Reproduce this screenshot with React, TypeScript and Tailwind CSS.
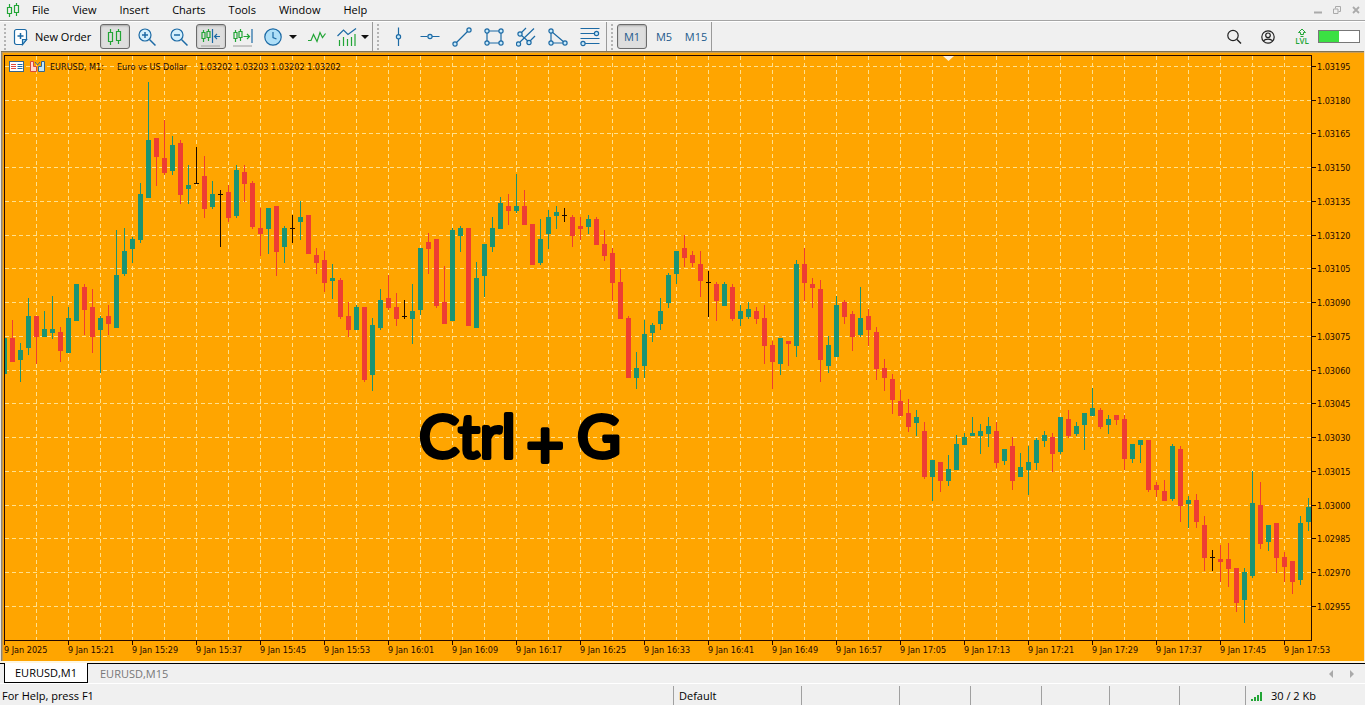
import React from 'react';

type Side = 'up' | 'down' | 'flat';
// high, body top, body bottom, low (chart units, growing downwards)
type Candle = [number, number, number, number, Side];

const candles: Candle[] = [
  [338, 338, 374, 376, 'up'], [320, 338, 362, 362, 'down'], [343, 350, 360, 382, 'up'], [298, 316, 348, 355, 'up'],
  [316, 316, 337, 364, 'down'], [311, 329, 337, 337, 'up'], [296, 329, 333, 339, 'up'], [327, 332, 351, 362, 'down'],
  [307, 318, 353, 353, 'up'], [284, 284, 321, 321, 'up'], [284, 287, 310, 335, 'down'], [289, 307, 337, 353, 'down'],
  [316, 318, 330, 373, 'up'], [305, 316, 324, 335, 'down'], [230, 275, 328, 328, 'up'], [228, 251, 274, 276, 'up'],
  [237, 239, 249, 263, 'up'], [183, 194, 240, 243, 'up'], [82, 140, 198, 198, 'up'], [138, 138, 157, 186, 'down'],
  [120, 158, 173, 175, 'down'], [136, 145, 171, 175, 'up'], [140, 143, 195, 204, 'down'], [165, 185, 189, 204, 'up'],
  [147, 183, 184, 184, 'flat'], [156, 176, 209, 218, 'down'], [181, 194, 207, 209, 'up'], [190, 194, 195, 247, 'flat'],
  [185, 192, 218, 222, 'down'], [165, 170, 216, 218, 'up'], [165, 172, 184, 202, 'down'], [181, 183, 227, 229, 'down'],
  [208, 228, 234, 256, 'down'], [208, 208, 229, 254, 'up'], [206, 206, 252, 276, 'down'], [226, 228, 247, 263, 'up'],
  [215, 228, 229, 243, 'flat'], [201, 217, 222, 240, 'up'], [215, 215, 254, 254, 'down'], [248, 255, 263, 274, 'down'],
  [251, 260, 283, 292, 'down'], [264, 278, 281, 299, 'up'], [278, 280, 317, 319, 'down'], [302, 316, 330, 337, 'down'],
  [305, 307, 330, 330, 'up'], [307, 307, 380, 382, 'down'], [318, 325, 375, 391, 'up'], [289, 300, 328, 330, 'up'],
  [275, 298, 308, 310, 'down'], [293, 307, 319, 326, 'down'], [300, 316, 317, 319, 'flat'], [284, 311, 319, 344, 'up'],
  [248, 248, 310, 315, 'up'], [233, 242, 249, 274, 'down'], [239, 239, 306, 308, 'down'], [266, 302, 324, 324, 'down'],
  [228, 230, 321, 321, 'up'], [226, 228, 236, 252, 'up'], [228, 228, 326, 326, 'down'], [262, 278, 328, 328, 'up'],
  [244, 244, 276, 297, 'up'], [217, 228, 247, 252, 'up'], [197, 203, 229, 229, 'up'], [194, 206, 211, 225, 'down'],
  [174, 206, 211, 213, 'up'], [190, 206, 225, 225, 'down'], [224, 224, 265, 265, 'down'], [219, 239, 263, 265, 'up'],
  [210, 217, 234, 249, 'up'], [206, 212, 216, 229, 'up'], [208, 215, 216, 222, 'flat'], [215, 217, 236, 247, 'down'],
  [217, 226, 229, 240, 'down'], [215, 219, 227, 234, 'up'], [217, 219, 245, 245, 'down'], [230, 244, 256, 261, 'down'],
  [248, 253, 283, 301, 'down'], [269, 282, 319, 319, 'down'], [316, 318, 378, 378, 'down'], [352, 368, 378, 389, 'up'],
  [320, 334, 366, 378, 'up'], [323, 325, 333, 342, 'up'], [298, 311, 324, 330, 'up'], [273, 275, 303, 308, 'up'],
  [251, 251, 274, 284, 'up'], [235, 248, 258, 267, 'down'], [251, 255, 263, 267, 'down'], [251, 264, 281, 297, 'down'],
  [271, 282, 283, 317, 'flat'], [282, 284, 301, 321, 'down'], [282, 284, 306, 306, 'up'], [284, 287, 319, 321, 'down'],
  [305, 311, 319, 326, 'up'], [302, 309, 317, 319, 'up'], [307, 311, 319, 324, 'down'], [305, 318, 346, 364, 'down'],
  [341, 345, 362, 389, 'down'], [338, 338, 364, 375, 'up'], [341, 341, 344, 366, 'down'], [260, 264, 346, 357, 'up'],
  [248, 264, 283, 301, 'down'], [278, 284, 288, 308, 'down'], [280, 289, 360, 382, 'down'], [336, 345, 366, 373, 'up'],
  [296, 305, 357, 357, 'up'], [300, 302, 317, 324, 'down'], [311, 314, 337, 351, 'down'], [287, 318, 335, 337, 'up'],
  [309, 316, 330, 346, 'down'], [327, 332, 369, 380, 'down'], [359, 368, 378, 391, 'down'], [374, 379, 400, 414, 'down'],
  [390, 401, 416, 416, 'down'], [399, 413, 427, 432, 'down'], [410, 417, 423, 436, 'up'], [422, 431, 477, 479, 'down'],
  [460, 460, 477, 501, 'up'], [462, 462, 481, 492, 'down'], [455, 469, 481, 486, 'up'], [435, 444, 470, 470, 'up'],
  [433, 437, 445, 445, 'up'], [417, 433, 436, 436, 'up'], [424, 431, 436, 454, 'up'], [417, 426, 434, 447, 'up'],
  [422, 431, 463, 468, 'down'], [449, 449, 461, 465, 'up'], [437, 446, 481, 490, 'down'], [453, 467, 477, 477, 'up'],
  [446, 462, 470, 495, 'up'], [438, 440, 463, 470, 'up'], [431, 435, 441, 447, 'up'], [433, 437, 454, 472, 'down'],
  [417, 417, 452, 454, 'up'], [410, 419, 436, 438, 'down'], [422, 426, 434, 436, 'up'], [413, 413, 425, 450, 'up'],
  [388, 408, 416, 416, 'up'], [408, 410, 427, 429, 'down'], [415, 419, 425, 434, 'up'], [415, 415, 420, 425, 'down'],
  [415, 419, 459, 470, 'down'], [444, 444, 459, 463, 'up'], [440, 440, 445, 463, 'up'], [440, 440, 490, 492, 'down'],
  [482, 485, 490, 497, 'down'], [480, 491, 501, 501, 'down'], [444, 446, 499, 501, 'up'], [446, 449, 506, 522, 'down'],
  [496, 500, 504, 528, 'up'], [494, 500, 522, 528, 'down'], [516, 525, 558, 571, 'down'], [550, 557, 558, 571, 'flat'],
  [545, 559, 562, 582, 'down'], [543, 559, 569, 587, 'down'], [568, 568, 603, 612, 'down'], [568, 572, 600, 623, 'up'],
  [471, 503, 576, 578, 'up'], [482, 505, 544, 549, 'down'], [525, 525, 542, 551, 'up'], [523, 523, 558, 573, 'down'],
  [552, 557, 567, 582, 'down'], [561, 561, 582, 594, 'down'], [516, 523, 580, 585, 'up'], [498, 507, 522, 531, 'up'],
];

const fills: Record<Side, string> = { up: '#1b9472', down: '#ee3d33', flat: '#1a0a00' };

const prices = Array.from({ length: 17 }, (_, i) => ({
  label: ((103195 - i * 15) / 100000).toFixed(5),
  y: Math.floor(66.4 + i * 33.75),
}));

const times = [
  '2025', '15:21', '15:29', '15:37', '15:45', '15:53', '16:01', '16:09', '16:17', '16:25', '16:33',
  '16:41', '16:49', '16:57', '17:05', '17:13', '17:21', '17:29', '17:37', '17:45', '17:53',
];

const menus = ['File', 'View', 'Insert', 'Charts', 'Tools', 'Window', 'Help'];

const BLUE = '#1c6aa5';
const GREEN = '#22a536';

function Chart() {
  return (
    <svg
      viewBox="0 51 1365 610"
      className="block w-full bg-[#ffa500]"
      fontFamily="'DejaVu Sans Condensed', 'DejaVu Sans', sans-serif"
      fontSize="9"
      fill="#240800"
      role="img"
      aria-label="EURUSD, M1 chart"
    >
      <defs>
        <clipPath id="plot">
          <rect x="5" y="56" width="1306" height="584" />
        </clipPath>
      </defs>
      <g shapeRendering="crispEdges">
        <rect x="0" y="51" width="1" height="610" fill="#e8e8e8" />
        <rect x="1" y="51" width="1" height="610" fill="#8b8577" />
        <rect x="2" y="52" width="1" height="609" fill="#c79a4e" />
        <rect x="1" y="51" width="1363" height="1" fill="#7d7358" />
        <rect x="2" y="52" width="1362" height="1" fill="#c99c56" />
        <rect x="1364" y="51" width="1" height="610" fill="#efe6d6" />
        <g stroke="#ffe08c" strokeDasharray="4 3" clipPath="url(#plot)">
          {prices.map(p => (
            <line key={p.y} x1="5" x2="1311" y1={p.y + 0.5} y2={p.y + 0.5} />
          ))}
          {Array.from({ length: 40 }, (_, i) => 36.5 + i * 32).map(x => (
            <line key={x} x1={x} x2={x} y1="56" y2="640" />
          ))}
        </g>
        <g clipPath="url(#plot)">
          {candles.map(([high, top, bottom, low, side], i) => (
            <g key={i} fill={fills[side]}>
              <rect x={4 + i * 8} y={high} width="1" height={low - high} />
              <rect x={2 + i * 8} y={top} width="5" height={bottom - top} />
            </g>
          ))}
        </g>
        <path d="M4.5 640.5V55.5H1311.5V640.5Z" fill="none" stroke="#240800" />
        {prices.map(p => (
          <rect key={p.y} x="1312" y={p.y} width="4" height="1" />
        ))}
        {times.map((t, i) => (
          <rect key={t} x={4 + i * 64} y="641" width="1" height="4" />
        ))}
      </g>
      <path d="M943 56h11l-5.500 5Z" fill="#fff0d8" />
      {prices.map(p => (
        <text key={p.label} x="1317" y={p.y + 4}>{p.label}</text>
      ))}
      {times.map((t, i) => (
        <text key={t} x={4 + i * 64} y="653">9 Jan {t}</text>
      ))}
      <g>
        <rect x="9.500" y="61.500" width="14" height="10" fill="#fff" stroke="#35658e" />
        <path d="M11 64.500h5M11 66.500h5M11 68.500h5" stroke="#e04a3d" />
        <path d="M17.500 64.500h5M17.500 66.500h5M17.500 68.500h5" stroke="#1c6aa5" />
        <path d="M30.500 61.500h3v5h3v5h-6Z" fill="#ffd9cf" stroke="#d9493a" />
        <path d="M44.500 61.500h-3v5h-3v5h6Z" fill="#bfe6fb" stroke="#35658e" />
        <path d="M35 62l2.500 3l2.500 -3" fill="none" stroke="#35658e" />
      </g>
      <text x="50" y="70">EURUSD, M1:</text>
      <text x="117" y="70">Euro vs US Dollar</text>
      <text x="199" y="70">1.03202 1.03203 1.03202 1.03202</text>
      <g
        fill="#000"
        stroke="#000"
        strokeWidth="4"
        strokeLinejoin="round"
        fontFamily="Lato, sans-serif"
        fontSize="60"
      >
        <text x="419" y="458">Ctrl</text>
        <text x="526" y="468" fontSize="66">+</text>
        <text x="577" y="458">G</text>
      </g>
    </svg>
  );
}

function Icon({ children, w = 20 }: { children: React.ReactNode; w?: number }) {
  return (
    <svg width={w} height="20" viewBox={`0 0 ${w} 20`} fill="none" stroke={BLUE} strokeWidth="1.2" className="shrink-0">
      {children}
    </svg>
  );
}

function ToolButton({ label, active, className = 'w-[30px]', children }: {
  label: string;
  active?: boolean;
  className?: string;
  children: React.ReactNode;
}) {
  return (
    <button
      type="button"
      aria-label={label}
      className={`flex h-[25px] shrink-0 items-center justify-center rounded-[3px] border ${className} ${
        active ? 'border-[#6b6b6b] bg-[#dedede] shadow-[inset_0_1px_2px_#aaa]' : 'border-transparent'
      }`}
    >
      {children}
    </button>
  );
}

function Grip() {
  return <div className="mx-1 h-[26px] w-0 shrink-0 border-l-2 border-dotted border-[#b4b4b4]" />;
}

function Divider() {
  return <div className="h-full w-px shrink-0 bg-[#9a9a9a]" />;
}

function Caret() {
  return (
    <svg width="8" height="4" viewBox="0 0 8 4" className="shrink-0">
      <path d="M0 0h8L4 4Z" fill="#111" />
    </svg>
  );
}

function Toolbar() {
  return (
    <div className="flex h-[30px] items-center border-t border-white">
      <Grip />
      <button type="button" className="mr-2 flex h-[25px] w-[82px] shrink-0 items-center gap-1 pl-px whitespace-nowrap">
        <Icon>
          <path d="M5.500 2.500h8a2 2 0 0 1 2 2v8l-4 5h-6a2 2 0 0 1-2-2v-11a2 2 0 0 1 2-2Z" fill="#fff" />
          <path d="M15.500 12.500h-4v5Z" fill="#9ed6f5" />
          <path d="M9.500 6v6M6.500 9h6" strokeWidth="1.500" />
        </Icon>
        New Order
      </button>
      <div className="flex items-center gap-[2px]">
        <ToolButton label="Candlesticks" active>
          <Icon>
            <path d="M5.500 2v3M5.500 15v3M13.500 2v2M13.500 14v3M3.500 5.500h4v9h-4ZM11.500 4.500h4v9h-4Z" stroke={GREEN} />
          </Icon>
        </ToolButton>
        <ToolButton label="Zoom in">
          <Icon>
            <circle cx="8" cy="8" r="6" fill="#d4effc" />
            <path d="M12.500 12.500l6 6" strokeWidth="1.500" />
            <path d="M8 5v6M5 8h6" strokeWidth="1.500" />
          </Icon>
        </ToolButton>
        <ToolButton label="Zoom out">
          <Icon>
            <circle cx="8" cy="8" r="6" fill="#d4effc" />
            <path d="M12.500 12.500l6 6" strokeWidth="1.500" />
            <path d="M5 8h6" strokeWidth="1.500" />
          </Icon>
        </ToolButton>
        <ToolButton label="Chart shift" active>
          <Icon>
            <path d="M2.500 3v2M2.500 12v3M7.500 2v2M7.500 11v3M1 5.500h3v6h-3ZM6 4.500h3v6h-3Z" stroke={GREEN} />
            <path d="M11.500 2v14M19 9.500h-5.500M16 7l-2.500 2.500l2.500 2.500" />
            <path d="M0 19h19" stroke="#aaa" />
          </Icon>
        </ToolButton>
        <ToolButton label="Auto scroll">
          <Icon>
            <path d="M2.500 3v2M2.500 12v3M7.500 2v2M7.500 11v3M1 5.500h3v6h-3ZM6 4.500h3v6h-3ZM10.500 9.500h6M14 7l2.500 2.500l-2.500 2.500" stroke={GREEN} />
            <path d="M19 2v14" />
            <path d="M0 19h19" stroke="#aaa" />
          </Icon>
        </ToolButton>
        <ToolButton label="Periods" className="w-10 gap-[6px]">
          <Icon>
            <circle cx="10" cy="10" r="8.200" fill="#aedff8" />
            <path d="M10 5v5.500l3.500 1.500" />
          </Icon>
          <Caret />
        </ToolButton>
        <ToolButton label="Indicators">
          <Icon>
            <path d="M1 13.500h3l2.500-6l3.500 7l3-9l2.500 5l3-4" stroke={GREEN} />
          </Icon>
        </ToolButton>
        <ToolButton label="Objects" className="w-[38px] gap-1">
          <Icon>
            <path d="M0.500 9l6-6l4.500 4.500l8-6" />
            <path d="M2.500 13v6M6.500 10v9M10.500 12v7M14.500 10v9M18 7v12" stroke={GREEN} />
          </Icon>
          <Caret />
        </ToolButton>
      </div>
      <Divider />
      <Grip />
      <div className="flex items-center gap-[2px] pr-px">
        <ToolButton label="Vertical line">
          <Icon><path d="M10.500 0.500v7M10.500 12v7" /><circle cx="10.500" cy="9.700" r="2.100" fill="#c9eafb" /></Icon>
        </ToolButton>
        <ToolButton label="Horizontal line">
          <Icon><path d="M0.500 9.500h7M12 9.500h7.500" /><circle cx="10" cy="9.500" r="2.100" fill="#c9eafb" /></Icon>
        </ToolButton>
        <ToolButton label="Trend line">
          <Icon>
            <path d="M4.500 15.500l11-11" />
            <circle cx="3" cy="17" r="2.100" fill="#c9eafb" /><circle cx="17" cy="3" r="2.100" fill="#c9eafb" />
          </Icon>
        </ToolButton>
        <ToolButton label="Rectangle">
          <Icon>
            <path d="M3 4h14v12H3Z" />
            <g fill="#c9eafb">
              <circle cx="3" cy="4" r="2.100" /><circle cx="17" cy="4" r="2.100" />
              <circle cx="3" cy="16" r="2.100" /><circle cx="17" cy="16" r="2.100" />
            </g>
          </Icon>
        </ToolButton>
        <ToolButton label="Pitchfork">
          <Icon>
            <path d="M5 6l5-5M4 15l14-13.500M14 14l5-5M5 8l8 7" />
            <g fill="#c9eafb">
              <circle cx="4" cy="7" r="2.100" /><circle cx="2.500" cy="17" r="2.100" /><circle cx="13" cy="15.500" r="2.100" />
            </g>
          </Icon>
        </ToolButton>
        <ToolButton label="Triangle">
          <Icon>
            <path d="M3 4v12h14Z" />
            <g fill="#c9eafb">
              <circle cx="3" cy="4" r="2.100" /><circle cx="3" cy="16" r="2.100" /><circle cx="17" cy="16" r="2.100" />
            </g>
          </Icon>
        </ToolButton>
        <ToolButton label="Fibonacci levels">
          <Icon>
            <path d="M0.500 1.500h19M0.500 6.500h14M0.500 11.500h19M5 16.500h14.500" />
            <circle cx="16.500" cy="6.500" r="2.100" fill="#c9eafb" /><circle cx="3" cy="16.500" r="2.100" fill="#c9eafb" />
          </Icon>
        </ToolButton>
      </div>
      <Divider />
      <Grip />
      <div className="flex items-center gap-[2px] text-[#1c5a8c]">
        <ToolButton label="M1" active>M1</ToolButton>
        <ToolButton label="M5">M5</ToolButton>
        <ToolButton label="M15">M15</ToolButton>
      </div>
      <Divider />
      <div className="ml-auto flex items-center gap-[14px] pr-[5px]">
        <button type="button" aria-label="Search">
          <Icon><g stroke="#222"><circle cx="9" cy="8.500" r="5.200" /><path d="M13 12.500l4 4" strokeWidth="1.500" /></g></Icon>
        </button>
        <button type="button" aria-label="Account">
          <Icon>
            <g stroke="#222">
              <circle cx="10" cy="10" r="6.200" /><circle cx="10" cy="8.300" r="2.300" /><path d="M5.500 14c1.500-2.500 7.500-2.500 9 0" />
            </g>
          </Icon>
        </button>
        <button type="button" className="flex w-5 flex-col items-center text-[8px] leading-[8px] font-semibold text-[#22a536]">
          <svg width="10" height="9" viewBox="0 0 10 9" fill="none" stroke={GREEN}>
            <path d="M3.500 8.500h3M3.500 6.500h3v-2h2L5 1L1.500 4.500h2Z" />
          </svg>
          LVL
        </button>
        <div className="-ml-2 h-[13px] w-[42px] border border-[#777] bg-white">
          <div className="h-full w-1/2 bg-[#3be043]" />
        </div>
      </div>
    </div>
  );
}

export default function App() {
  return (
    <div className="flex min-h-screen flex-col bg-[#f0f0f0] font-['Open_Sans','Noto_Sans',sans-serif] text-[11px] leading-4 text-black">
      <header>
        <div className="flex h-[21px] items-center border-b border-[#a5a5a5] pl-[3px]">
          <Icon>
            <path d="M6.500 4v3M6.500 14v3M13.500 3v2M13.500 13v3M4.500 7.500h4v6h-4ZM11.500 5.500h4v7h-4Z" stroke={GREEN} />
          </Icon>
          <nav className="ml-[9px] flex gap-[23px]">
            {menus.map(m => (
              <button key={m} type="button">{m}</button>
            ))}
          </nav>
          <div className="ml-auto flex items-center gap-[11px] pr-[5px]">
            <button type="button" aria-label="Minimize">
              <svg width="8" height="8" viewBox="0 0 8 8"><path d="M0 6.500h8" stroke="#aaa" strokeWidth="2" /></svg>
            </button>
            <button type="button" aria-label="Restore">
              <svg width="8" height="8" viewBox="0 0 8 8" fill="none" stroke="#aaa"><path d="M0.500 3h4.500v4.500h-4.500ZM2.500 2.500v-2h5v5h-2" /></svg>
            </button>
            <button type="button" aria-label="Close">
              <svg width="8" height="8" viewBox="0 0 8 8"><path d="M1 1l6 6M7 1l-6 6" stroke="#aaa" strokeWidth="1.800" /></svg>
            </button>
          </div>
        </div>
        <Toolbar />
      </header>

      <main>
        <Chart />
      </main>

      <div className="flex h-[22px] border-t-2 border-[#fff6df]">
        <div className="w-1 border-t border-black" />
        <button type="button" className="h-5 w-[84px] border border-t-0 border-black bg-white">EURUSD,M1</button>
        <div className="flex flex-1 items-center border-t border-black pr-[11px] pl-3">
          <button type="button" className="text-[#777]">EURUSD,M15</button>
          <div className="ml-auto flex gap-[17px]">
            <svg width="4" height="8" viewBox="0 0 4 8"><path d="M4 0v8L0 4Z" fill="#aaa" /></svg>
            <svg width="4" height="8" viewBox="0 0 4 8"><path d="M0 0v8l4-4Z" fill="#aaa" /></svg>
          </div>
        </div>
      </div>

      <footer className="flex flex-1 items-stretch border-t border-white pt-[2px] whitespace-nowrap">
        <div className="flex flex-1 items-center pl-[2px]">For Help, press F1</div>
        <div className="flex w-32 items-center border-l border-[#a0a0a0] pl-[5px]">Default</div>
        <div className="w-[98px] border-l border-[#a0a0a0]" />
        <div className="w-[71px] border-l border-[#a0a0a0]" />
        <div className="w-[71px] border-l border-[#a0a0a0]" />
        <div className="w-[68px] border-l border-[#a0a0a0]" />
        <div className="w-[70px] border-l border-[#a0a0a0]" />
        <div className="w-[66px] border-l border-[#a0a0a0]" />
        <div className="flex w-[120px] items-center gap-2 border-l border-[#a0a0a0] pl-[5px]">
          <svg width="12" height="10" viewBox="0 0 12 10" fill="#22a536">
            <path d="M0 8h2v2H0ZM3 6h2v4H3ZM6 4h2v6H6ZM9 1h2v9H9Z" />
          </svg>
          30 / 2 Kb
        </div>
      </footer>
    </div>
  );
}
